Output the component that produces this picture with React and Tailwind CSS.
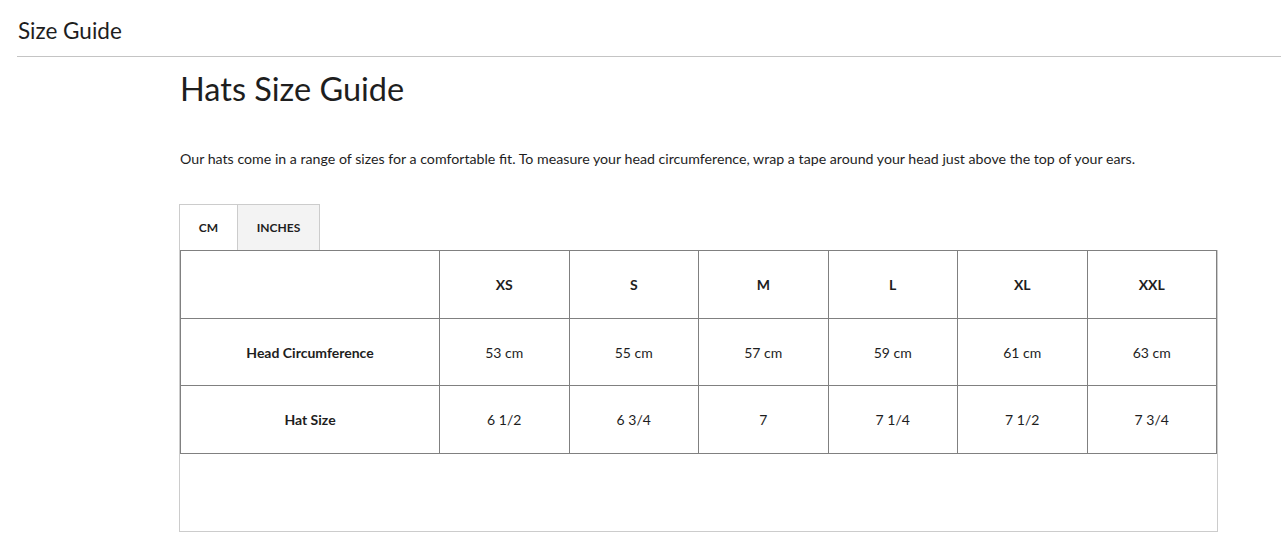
import React from "react";

const sizes = ["XS", "S", "M", "L", "XL", "XXL"];
const circ = ["53 cm", "55 cm", "57 cm", "59 cm", "61 cm", "63 cm"];
const hat = ["6 1/2", "6 3/4", "7", "7 1/4", "7 1/2", "7 3/4"];

export default function App() {
  const font = { fontFamily: '"Lato", "Open Sans", sans-serif' };
  return (
    <div className="bg-white min-h-[555px] text-[#1e1e1e]" style={font}>
      <div className="ml-[17px] h-[57px] border-b border-[#c4c4c4] flex items-center pt-[7px]">
        <h2 className="pl-[1px] text-[22.5px] leading-none font-normal">Size Guide</h2>
      </div>
      <div className="ml-[179px] w-[1039px]">
        <h1 className="pl-[1px] mt-[12px] text-[32.5px] leading-[40px] font-normal">Hats Size Guide</h1>
        <p className="pl-[1px] mt-[40px] text-[14.2px] leading-[20px]">
          Our hats come in a range of sizes for a comfortable fit. To measure your head circumference, wrap a tape around your head just above the top of your ears.
        </p>
        <div className="mt-[35px] flex">
          <div className="w-[58px] h-[46px] border-t border-l border-[#cccccc] bg-white flex items-center justify-center text-[12px] font-bold">CM</div>
          <div className="w-[83px] h-[46px] border border-b-0 border-[#cccccc] bg-[#f3f3f3] flex items-center justify-center text-[12px] font-bold">INCHES</div>
        </div>
        <div className="border border-t-0 border-[#cccccc] h-[282px]">
          <table className="w-[1037px] border-collapse text-[14px] text-center">
            <tbody>
              <tr className="h-[68px]">
                <td className="border border-[#808080] w-[259px]"></td>
                {sizes.map((s) => (
                  <td key={s} className="border border-[#808080] font-bold">{s}</td>
                ))}
              </tr>
              <tr className="h-[67px]">
                <td className="border border-[#808080] font-bold">Head Circumference</td>
                {circ.map((s) => (
                  <td key={s} className="border border-[#808080]">{s}</td>
                ))}
              </tr>
              <tr className="h-[68px]">
                <td className="border border-[#808080] font-bold">Hat Size</td>
                {hat.map((s) => (
                  <td key={s} className="border border-[#808080]">{s}</td>
                ))}
              </tr>
            </tbody>
          </table>
        </div>
      </div>
    </div>
  );
}
